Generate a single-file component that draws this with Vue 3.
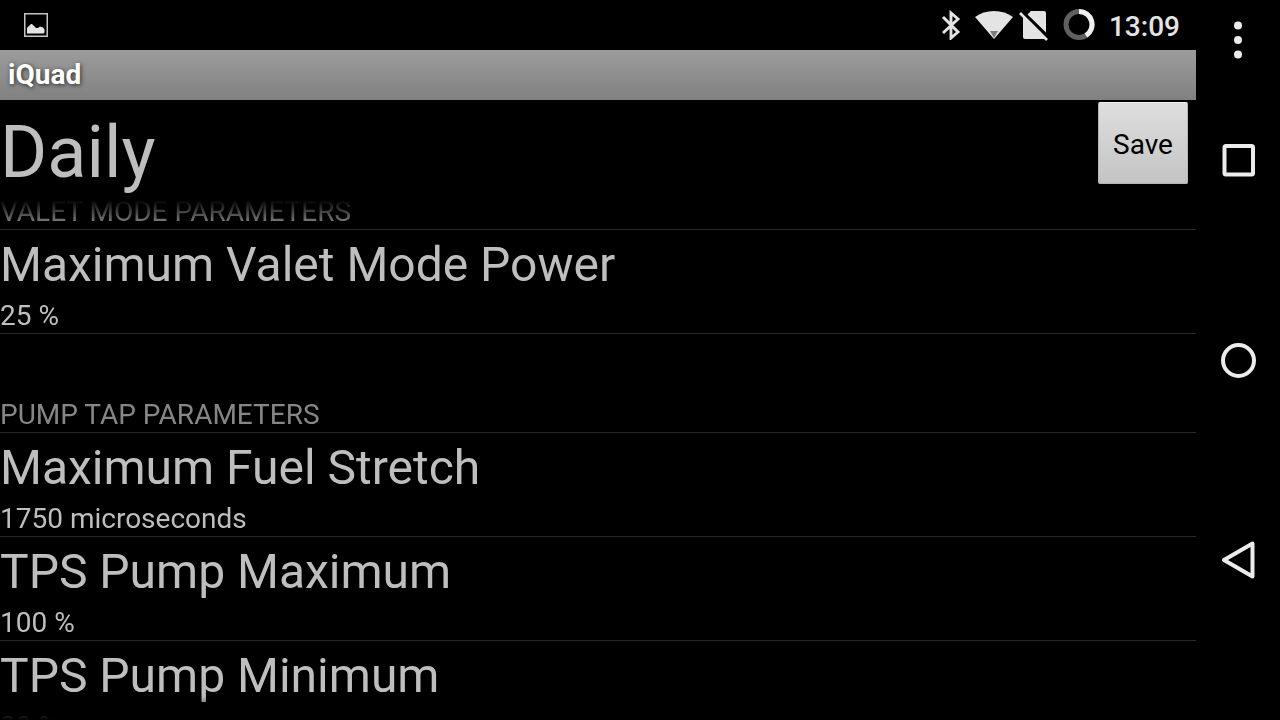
<script setup>
const sections = [
  {
    title: 'VALET MODE PARAMETERS',
    items: [{ name: 'Maximum Valet Mode Power', value: '25 %' }],
  },
  {
    title: 'PUMP TAP PARAMETERS',
    items: [
      { name: 'Maximum Fuel Stretch', value: '1750 microseconds' },
      { name: 'TPS Pump Maximum', value: '100 %' },
      { name: 'TPS Pump Minimum', value: '20 %' },
    ],
  },
];
</script>

<template>
  <div class="device">
    <div class="screen">
      <div class="status-bar">
        <svg class="status-picture" width="24" height="24" viewBox="0 0 24 24">
          <rect x="0.75" y="0.75" width="22.5" height="22.5" fill="none" stroke="#c4c4c4" stroke-width="1.5" />
          <path d="M3 20.500V15l4-4h1l4 4h2l2-1.500 3 1 1.500 2v3l-1 1z" fill="#e4e4e4" />
        </svg>
        <div class="status-icons">
          <svg class="bluetooth" width="20" height="30" viewBox="0 0 20 30">
            <path d="M2 7l15 15-7 6V3l7 6L2 23" fill="none" stroke="#e4e4e4" stroke-width="2.9" />
          </svg>
          <svg class="wifi" width="38" height="28" viewBox="0 0 38 28">
            <path d="M0 6Q8 0 19 0t19 6L19 28z" fill="#e4e4e4" />
            <path d="M15 20h8l-4 7z" fill="#7c7c7c" />
          </svg>
          <svg class="no-sim" width="30" height="32" viewBox="0 0 30 32">
            <path d="M4 7v21q0 2 2 2h20zM12 2h13q2 0 2 2v19.500L8.500 5.500z" fill="#e4e4e4" />
            <path d="M1 4l27 27" stroke="#e4e4e4" stroke-width="2.6" />
          </svg>
          <svg class="battery" width="32" height="32" viewBox="0 0 32 32">
            <circle cx="16" cy="15.500" r="13" fill="none" stroke="#606060" stroke-width="5" />
            <path d="M16 2.500a13 13 0 0 1 7 24" fill="none" stroke="#f0f0f0" stroke-width="5" />
          </svg>
          <span class="clock">13:09</span>
        </div>
      </div>

      <div class="title-bar">iQuad</div>

      <header class="header">
        <h1>Daily</h1>
        <button class="save" type="button">Save</button>
      </header>

      <main class="list">
        <section v-for="section in sections" :key="section.title" class="section">
          <h2>{{ section.title }}</h2>
          <div v-for="item in section.items" :key="item.name" class="item">
            <div class="item-name">{{ item.name }}</div>
            <div class="item-value">{{ item.value }}</div>
          </div>
        </section>
      </main>
    </div>

    <nav class="nav-bar">
      <button type="button" class="nav-menu" aria-label="Menu">
        <svg width="40" height="40" viewBox="0 0 40 40" fill="#ececec">
          <circle cx="20" cy="5.5" r="4" />
          <circle cx="20" cy="20" r="4" />
          <circle cx="20" cy="34.5" r="4" />
        </svg>
      </button>
      <button type="button" aria-label="Recent apps">
        <svg width="40" height="40" viewBox="0 0 40 40" fill="none" stroke="#ececec" stroke-width="4">
          <rect x="6.5" y="6" width="28.5" height="28.5" rx="1.5" />
        </svg>
      </button>
      <button type="button" aria-label="Home">
        <svg width="40" height="40" viewBox="0 0 40 40" fill="none" stroke="#ececec" stroke-width="4">
          <circle cx="20.5" cy="20.5" r="15.5" />
        </svg>
      </button>
      <button type="button" aria-label="Back">
        <svg width="40" height="40" viewBox="0 0 40 40" fill="none" stroke="#ececec" stroke-width="4" stroke-linejoin="round">
          <path d="M6 20L34.500 3.500v33z" />
        </svg>
      </button>
    </nav>
  </div>
</template>

<style>
body {
  margin: 0;
  background: #000;
}
</style>

<style scoped>
.device {
  display: flex;
  height: 100vh;
  overflow: hidden;
  background: #000;
  color: #bebebe;
  font-family: Roboto, "Liberation Sans", sans-serif;
  font-size: 28px;
}

.screen {
  flex: 1;
  min-width: 0;
  display: flex;
  flex-direction: column;
}

.status-bar {
  height: 50px;
  flex-shrink: 0;
  box-sizing: border-box;
  padding: 0 16px 0 24px;
  display: flex;
  align-items: center;
  justify-content: space-between;
}

.status-icons {
  display: flex;
  align-items: center;
}

.wifi {
  margin-left: 14px;
}

.no-sim {
  margin-left: 6px;
}

.battery {
  margin-left: 14px;
}

.clock {
  margin-left: 14px;
  padding-top: 2px;
  color: #e4e4e4;
  font-weight: 500;
}

.title-bar {
  flex-shrink: 0;
  padding-left: 8px;
  line-height: 50px;
  font-weight: 700;
  color: #fff;
  text-shadow: 1px 1px 4px #000000b0;
  background: linear-gradient(#9c9c9c, #808080);
}

.header {
  flex-shrink: 0;
  height: 100px;
  display: flex;
  align-items: flex-start;
  justify-content: space-between;
}

h1 {
  margin: 0;
  padding-top: 11px;
  font-size: 72px;
  line-height: 84px;
  font-weight: 400;
}

.save {
  width: 90px;
  height: 82px;
  margin: 2px 8px 0 0;
  padding: 2px 0 0;
  border: 1px solid #b4b4b4;
  border-top-color: #f0f0f0;
  border-radius: 2px;
  background: linear-gradient(#dedede, #c4c4c4);
  color: #000;
  font: inherit;
}

.list {
  flex: 1;
  min-height: 0;
  overflow: hidden;
  mask-image: linear-gradient(transparent, #000 24px, #000 calc(100% - 24px), transparent);
}

.section {
  margin-bottom: 60px;
}

/* the list is scrolled a little, its first heading is cut by the edge */
.section:first-child {
  margin-top: -9px;
}

h2 {
  margin: 0;
  padding-top: 4px;
  font-size: 28px;
  line-height: 34px;
  font-weight: 400;
  color: #868686;
  border-bottom: 1px solid #282828;
}

.item {
  border-bottom: 1px solid #282828;
}

.item-name {
  padding-top: 2px;
  font-size: 48px;
  line-height: 66px;
}

.item-value {
  line-height: 35px;
}

.nav-bar {
  width: 84px;
  flex-shrink: 0;
  box-sizing: border-box;
  padding: 20px 0 60px;
  display: flex;
  flex-direction: column;
  align-items: center;
}

.nav-bar button {
  flex: 1;
  padding: 0;
  border: 0;
  background: none;
}

.nav-bar .nav-menu {
  flex: none;
}

.nav-bar svg {
  display: block;
}
</style>
